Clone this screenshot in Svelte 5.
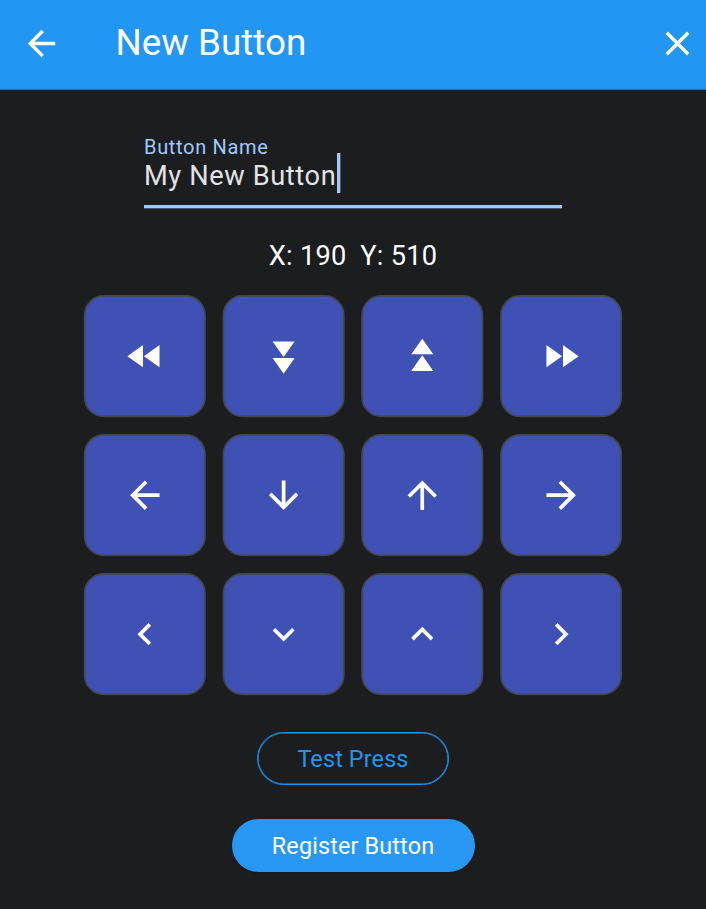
<script>
  let name = $state('My New Button');
  let x = $state(190);
  let y = $state(510);

  const rewind = 'M11 18V6l-8.5 6 8.5 6zm.5-6l8.5 6V6l-8.5 6z';
  const forward = 'M4 18l8.5-6L4 6v12zm9-12v12l8.5-6L13 6z';
  const back = 'M20 11H7.83l5.59-5.59L12 4l-8 8 8 8 1.41-1.41L7.83 13H20v-2z';

  const rows = [
    [
      { label: 'Far left', d: rewind, dx: -100, dy: 0 },
      { label: 'Far down', d: forward, turn: 90, dx: 0, dy: 100 },
      { label: 'Far up', d: forward, turn: -90, dx: 0, dy: -100 },
      { label: 'Far right', d: forward, dx: 100, dy: 0 }
    ],
    [
      { label: 'Left', d: back, dx: -10, dy: 0 },
      { label: 'Down', d: 'M20 12l-1.41-1.41L13 16.17V4h-2v12.17l-5.58-5.59L4 12l8 8 8-8z', dx: 0, dy: 10 },
      { label: 'Up', d: 'M4 12l1.41 1.41L11 7.83V20h2V7.83l5.58 5.59L20 12l-8-8-8 8z', dx: 0, dy: -10 },
      { label: 'Right', d: 'M12 4l-1.41 1.41L16.17 11H4v2h12.17l-5.58 5.59L12 20l8-8z', dx: 10, dy: 0 }
    ],
    [
      { label: 'Nudge left', d: 'M15.41 7.41L14 6l-6 6 6 6 1.41-1.41L10.83 12z', dx: -1, dy: 0 },
      { label: 'Nudge down', d: 'M16.59 8.59L12 13.17 7.41 8.59 6 10l6 6 6-6z', dx: 0, dy: 1 },
      { label: 'Nudge up', d: 'M12 8l-6 6 1.41 1.41L12 10.83l4.59 4.58L18 14z', dx: 0, dy: -1 },
      { label: 'Nudge right', d: 'M10 6L8.59 7.41 13.17 12l-4.58 4.59L10 18l6-6z', dx: 1, dy: 0 }
    ]
  ];

  function move(key) {
    x += key.dx;
    y += key.dy;
  }
</script>

<div class="screen">
  <header>
    <button class="icon" aria-label="Back">
      <svg viewBox="0 0 24 24"><path d={back} /></svg>
    </button>
    <h1>New Button</h1>
    <button class="icon" aria-label="Close">
      <svg viewBox="0 0 24 24"><path d="M19 6.41L17.59 5 12 10.59 6.41 5 5 6.41 10.59 12 5 17.59 6.41 19 12 13.41 17.59 19 19 17.59 13.41 12z" /></svg>
    </button>
  </header>

  <main>
    <div class="field">
      <span class="label">Button Name</span>
      <div class="value"><span>{name}</span><i class="caret"></i></div>
    </div>

    <p class="coords">X: {x}&nbsp; Y: {y}</p>

    <div class="pad">
      {#each rows as row}
        <div class="row">
          {#each row as key}
            <button class="key" aria-label={key.label} onclick={() => move(key)}>
              <svg viewBox="0 0 122.14 122.14">
                <g class="face">
                  <rect x="0.83" y="0.83" width="120.48" height="120.48" rx="19.2" />
                  <g transform="translate(61.07 61.07) rotate({key.turn ?? 0}) scale(1.84) translate(-12 -12)">
                    <path d={key.d} />
                  </g>
                </g>
              </svg>
            </button>
          {/each}
        </div>
      {/each}
    </div>

    <button class="pill outlined">Test Press</button>
    <button class="pill filled">Register Button</button>
  </main>
</div>

<style>
  :global(body) {
    margin: 0;
    background: #1b1d1e;
  }

  .screen {
    width: 706px;
    height: 909px;
    overflow: hidden;
    background: #1b1d1e;
    font-family: Roboto, 'Liberation Sans', sans-serif;
    color: #fff;
  }

  button {
    padding: 0;
    border: 0;
    background: none;
    color: inherit;
    font: inherit;
    box-sizing: border-box;
  }

  svg {
    display: block;
    fill: #fff;
    overflow: visible;
  }

  header {
    box-sizing: border-box;
    height: 90px;
    padding: 0 8px 3px 21px;
    border-bottom: 1px solid #1f6cab;
    display: flex;
    align-items: center;
    background: #2196f3;
  }

  .icon svg {
    width: 41px;
    height: 41px;
  }

  h1 {
    flex: 1;
    margin: 0 0 1px 53.5px;
    font-size: 36.8px;
    font-weight: 400;
    line-height: 44px;
  }

  main {
    display: flex;
    flex-direction: column;
    align-items: center;
    padding-top: 45px;
  }

  .field {
    width: 418px;
    height: 74px;
    background: linear-gradient(#a0c9ff 3px, #48586c 3px) bottom / 100% 4px no-repeat;
  }

  .label {
    display: block;
    font-size: 20px;
    line-height: 24px;
    height: 18px;
    letter-spacing: 0.67px;
    color: #a0c9ff;
  }

  .value {
    display: flex;
    align-items: center;
    height: 40px;
    font-size: 27.2px;
    line-height: 46px;
    letter-spacing: 0.62px;
    color: #e3e2e6;
  }

  .value span {
    height: 40px;
  }

  .caret {
    width: 4px;
    height: 40px;
    margin-left: 0.8px;
    background: linear-gradient(90deg, #a0c9ff 3px, #48586c 3px);
  }

  .coords {
    margin: 31px 0 23px;
    font-size: 27.2px;
    line-height: 32px;
    letter-spacing: 0.22px;
  }

  .pad {
    display: flex;
    flex-direction: column;
    gap: 16.67px;
  }

  .row {
    display: flex;
    gap: 16.67px;
  }

  .key,
  .key svg {
    width: 122.14px;
    height: 122.14px;
  }

  .key rect {
    fill: #3f51b5;
    stroke: #43474e;
    stroke-width: 1.67;
  }

  .key:nth-child(1) .face {
    transform: translate(-0.25px, 0.1px);
  }

  .key:nth-child(2) .face {
    transform: translate(-0.44px, 0.1px);
  }

  .key:nth-child(3) .face {
    transform: translate(0.2px, 0.1px);
  }

  .key:nth-child(4) .face {
    transform: translate(0.1px, 0.1px);
  }

  .pill {
    height: 53px;
    border-radius: 27px;
    font-size: 23.4px;
    line-height: 28px;
    letter-spacing: 0.14px;
  }

  .outlined {
    width: 192px;
    margin-top: 37.4px;
    border: 1px solid #2196f3;
    box-shadow: inset 0 0 0 0.6px #2196f3;
    color: #2196f3;
  }

  .filled {
    width: 243px;
    margin-top: 34px;
    background: #2998f5;
    box-shadow: 0 1px 2px rgba(0, 0, 0, 0.3);
  }
</style>
